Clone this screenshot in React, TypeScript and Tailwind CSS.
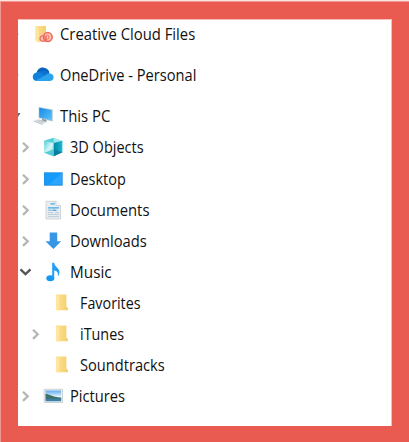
import React from "react";

type IconName = "creative" | "cloud" | "pc" | "cube" | "desktop" | "document" | "download" | "music" | "folder" | "picture";

type Item = {
  label: string;
  icon: IconName;
  level: 0 | 1 | 2;
  chevron?: "right" | "down" | "clipped" | "clippedDark";
  width: number;
};

const items: Item[] = [
  { label: "Creative Cloud Files", icon: "creative", level: 0, chevron: "clipped", width: 135 },
  { label: "OneDrive - Personal", icon: "cloud", level: 0, chevron: "clipped", width: 136 },
  { label: "This PC", icon: "pc", level: 0, chevron: "clippedDark", width: 50 },
  { label: "3D Objects", icon: "cube", level: 1, chevron: "right", width: 74 },
  { label: "Desktop", icon: "desktop", level: 1, chevron: "right", width: 56 },
  { label: "Documents", icon: "document", level: 1, chevron: "right", width: 79.5 },
  { label: "Downloads", icon: "download", level: 1, chevron: "right", width: 77 },
  { label: "Music", icon: "music", level: 1, chevron: "down", width: 41.5 },
  { label: "Favorites", icon: "folder", level: 2, width: 61 },
  { label: "iTunes", icon: "folder", level: 2, chevron: "right", width: 44.5 },
  { label: "Soundtracks", icon: "folder", level: 2, width: 85 },
  { label: "Pictures", icon: "picture", level: 1, chevron: "right", width: 55 },
];

function Icon({ name }: { name: IconName }) {
  return (
    <svg className="h-[22px] w-[22px] shrink-0" viewBox="0 0 22 22">
      <defs>
        <linearGradient id="screen" x1="0" y1="0" x2="1" y2="1">
          <stop stopColor="#1688e8" /><stop offset="1" stopColor="#5cc4fa" />
        </linearGradient>
        <linearGradient id="gold" x1="0" y1="0" x2="1" y2="0">
          <stop stopColor="#ffe192" /><stop offset="1" stopColor="#f3cf6c" />
        </linearGradient>
        <linearGradient id="sky" x1="0" y1="0" x2="0" y2="1">
          <stop stopColor="#5daaf0" /><stop offset=".6" stopColor="#eaf8ff" />
        </linearGradient>
        <linearGradient id="ice" x1="0" y1="0" x2="1" y2="1">
          <stop stopColor="#4fcbd6" /><stop offset=".5" stopColor="#d4f7f8" /><stop offset="1" stopColor="#6fd9e0" />
        </linearGradient>
        <linearGradient id="teal" x1="0" y1="0" x2="1" y2="0">
          <stop stopColor="#0785a5" /><stop offset=".5" stopColor="#0a9fbe" /><stop offset="1" stopColor="#22b8cf" />
        </linearGradient>
      </defs>
      {name === "creative" && (
        <>
          <path d="M3.5 3H14v13.5h-3.5L7 19.5l-3.5-2z" fill="url(#gold)" />
          <path d="M3.5 3l3 1.7v14.8l-3-2z" fill="#ffe6a0" />
          <ellipse cx="14.3" cy="14.3" rx="6.8" ry="4.8" fill="#fcc6ae" />
          <ellipse cx="11" cy="15.6" rx="3" ry="2.7" fill="none" stroke="#f2746a" strokeWidth="1.3" />
          <ellipse cx="15.8" cy="14" rx="4.3" ry="4.4" fill="none" stroke="#ee6a62" strokeWidth="1.5" />
          <ellipse cx="15.4" cy="14.2" rx="1.6" ry="2" fill="none" stroke="#ee6a62" strokeWidth="1" />
          <path d="M11 14.5l3.5 3" stroke="#ee6a62" strokeWidth="1.1" />
        </>
      )}
      {name === "cloud" && (
        <g transform="translate(0 -.8)">
          <path d="M4.5 10C5 5.8 9 3 12.6 4.7c2.8.5 4.4 2.4 4.8 4.8L11 14z" fill="#0864bd" />
          <path d="M9 8c3-1.4 7 0 8.5 2L12 15 6 9.4z" fill="#0f72ce" />
          <path d="M4.5 17.8C-.6 17.3-.5 10 4.8 9.3c2-.6 4 .1 5.4 1.2l7 6.5z" fill="#1180dc" />
          <path d="M3.6 17.6l11.6-6.8c4-1.6 6.6.7 6.4 3.3-.1 2.4-1.6 3.7-4 3.7H5z" fill="#29a3ec" />
        </g>
      )}
      {name === "pc" && (
        <>
          <path d="M6.7 2l14 2.5v12l-14-3.5z" fill="#a9c3d2" />
          <path d="M7.3 2.8l12.4 2.4v10L7.3 12.2z" fill="url(#screen)" />
          <path d="M10 13.8l4.5 1.2v2.2l-4.5-1z" fill="#84929b" />
          <path d="M1.3 15.7l5-1.5 9 2.7-4.8 2.4z" fill="#dadfe3" />
          <path d="M1.3 15.7l9.2 3.4v.9l-9.2-3.4z" fill="#b8c1c8" />
          <path d="M5 15.6l6 1.9M7 15l5.5 1.7" stroke="#b1bbc2" strokeWidth=".6" />
        </>
      )}
      {name === "cube" && (
        <>
          <path d="M2.3 4.8l9.4-3 8.6 3v11.4l-8.6 4-9.4-3.5z" fill="#9be9eb" />
          <path d="M2.3 4.8l9.4 2.3v13.1l-9.4-3.5z" fill="url(#ice)" />
          <path d="M11.7 7.1l8.6-2.3v11.4l-8.6 4z" fill="url(#teal)" />
          <path d="M11.7 13.2l8.6 3-8.6 4z" fill="#087e9e" />
          <path d="M2.3 16.7l9.4-3.5v7z" fill="#54cbd6" />
          <path d="M2.3 4.8l9.4-3v5.3z" fill="#55cfd7" />
        </>
      )}
      {name === "desktop" && (
        <>
          <path d="M2 4.3h18.7v13.4H2z" fill="#258fdf" />
          <path d="M2.8 5.1h17.1v11.3H2.8z" fill="#149bfb" />
          <path d="M19.9 5.1v11.3H7z" fill="#2ba5ff" />
        </>
      )}
      {name === "document" && (
        <>
          <path d="M4 2.3h10l4.5 4.2V20H4z" fill="#e9edf0" stroke="#c6cdd2" strokeWidth=".8" />
          <path d="M14 2.3v4.2h4.5" fill="#fbfdff" stroke="#bdc8cf" strokeWidth=".7" />
          <path d="M8.5 4.8h4.3M6 8.8h11M10.5 11.4h4" stroke="#4ba9e3" strokeWidth="1.3" />
          <path d="M12 8.8v3M6 11.2h4" stroke="#78b9e0" strokeWidth="1" />
          <path d="M6 13.6h5M13 13.6h4M6 15.5h11M6 17.6h11" stroke="#b7cbd7" strokeWidth=".9" />
        </>
      )}
      {name === "download" && <path d="M7.7 2.5h7.5v8.7h4L11.4 19 3.4 11.2h4.3z" fill="#3897e5" />}
      {name === "music" && (
        <>
          <ellipse cx="8.3" cy="17.2" rx="4" ry="3" fill="#1598f1" />
          <path d="M10.2 1.7h2c.2 4.6 6.8 5.6 5 11.3-.3 1.2-.8 1.8-1.4 2.2.7-3.4-.5-5.2-3.6-5.7v8h-2z" fill="#209ff4" />
        </>
      )}
      {name === "folder" && (
        <>
          <path d="M4 2.5h10.4v12.3l1.6 1v2.4H4z" fill="url(#gold)" />
          <path d="M4 2.5l3 1.7V19l-3-1.7z" fill="#ffe5a0" />
        </>
      )}
      {name === "picture" && (
        <>
          <path d="M2.2 4.3h18.3v13.2H2.2z" fill="#f6f8f9" stroke="#c0c5c8" strokeWidth=".8" />
          <path d="M3.5 5.5h15.7v10.8H3.5z" fill="url(#sky)" />
          <path d="M3.5 8.7c4 .2 6.5 3.5 15.7 3.8v1.7H3.5z" fill="#3d7067" />
          <path d="M3.5 13.7h15.7v2.6H3.5z" fill="#3c80a8" />
        </>
      )}
    </svg>
  );
}

function Chevron({ kind }: { kind?: Item["chevron"] }) {
  return (
    <svg className="h-[14px] w-[14px] shrink-0" viewBox="0 0 14 14">
      {kind === "right" && <path d="M4 2.7l4.7 4.6L4 11.9" fill="none" stroke="#b5b5b5" strokeWidth="2.3" />}
      {kind === "down" && <path d="M1.5 4.3l5 4.8 5-4.8" fill="none" stroke="#555" strokeWidth="2.3" />}
      {kind === "clipped" && <path d="M0 6l1 1-1 1z" fill="#c8c8c8" />}
      {kind === "clippedDark" && <path d="M0 4h2.5L0 8z" fill="#666" />}
    </svg>
  );
}

function Label({ text, width }: { text: string; width: number }) {
  const ref = React.useRef<HTMLSpanElement>(null);
  const [scale, setScale] = React.useState(1);
  React.useLayoutEffect(() => {
    if (ref.current) setScale(width / ref.current.offsetWidth);
  }, [width]);
  return (
    <span ref={ref} className="origin-left whitespace-nowrap" style={{ transform: `scaleX(${scale})` }}>
      {text}
    </span>
  );
}

export default function App() {
  return (
    <main className="h-[442px] w-[409px] overflow-hidden border-t border-[#fbe3e1] bg-[#e95b50]">
      <div className="h-[441px] border-l border-t border-[#f09a93] pl-[17px] pt-[17px]">
        <div className="h-[407px] w-[374px] overflow-hidden border-r border-t border-[#f4bdb8] bg-white font-['Open_Sans','Noto_Sans',sans-serif] text-[15.5px] text-[#111]">
          <ul className="-mt-[2px]">
            {items.map((item, index) => (
              <li
                key={item.label}
                className={`flex h-[31.1px] items-center ${index < 2 ? "mb-[10.3px]" : ""} ${item.level === 0 ? "" : item.level === 1 ? "pl-[1px]" : "pl-[11px]"}`}
              >
                <Chevron kind={item.chevron} />
                <span className={item.level === 0 ? "" : item.level === 1 ? "ml-[9px]" : "ml-[8.5px]"}>
                  <Icon name={item.icon} />
                </span>
                <span className={`flex leading-5 ${item.level === 2 ? "ml-[6.5px]" : "ml-[6px]"}`}>
                  <Label text={item.label} width={item.width} />
                </span>
              </li>
            ))}
          </ul>
        </div>
      </div>
    </main>
  );
}
